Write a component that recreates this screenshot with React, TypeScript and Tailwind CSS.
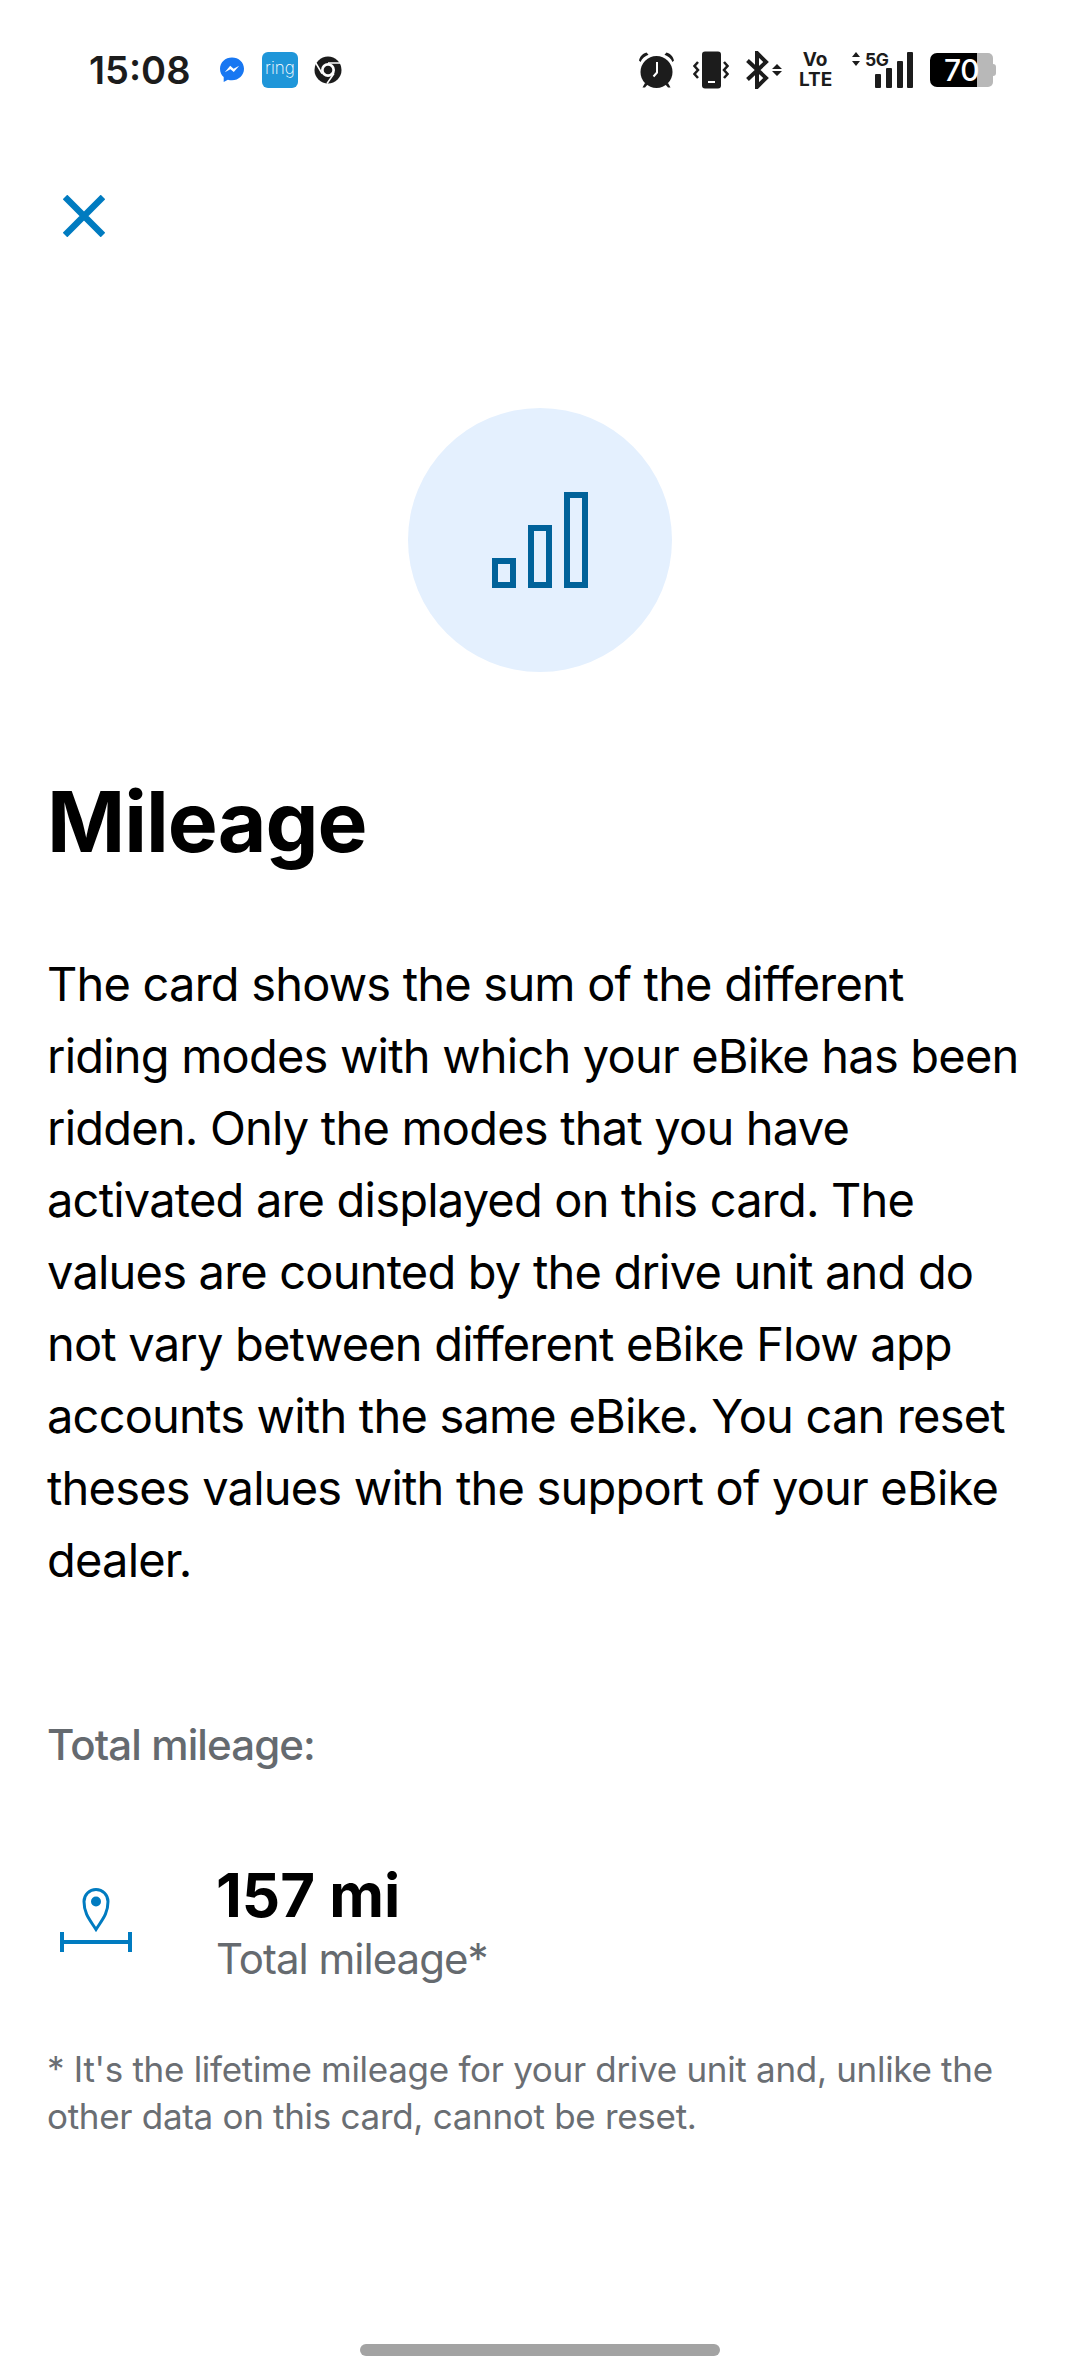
function CloseIcon() {
  return (
    <svg width="42" height="42" viewBox="0 0 42 42" fill="none" stroke="#007bc0" strokeWidth="6.500">
      <path d="M2 2l38 38M40 2L2 40" />
    </svg>
  );
}

function Messenger() {
  return (
    <svg width="24" height="26" viewBox="0 0 24 26">
      <path d="M12 0.500C5.400 0.500 0 5.300 0 11.800c0 3.400 1.400 6.300 3.700 8.300V25l4.200-2.300c1.300.4 2.700.6 4.100.6 6.600 0 12-4.900 12-11.500S18.600 0.500 12 0.500z" fill="#1877f2" />
      <path d="M4.800 15.200l5.400-6.400 3.400 2.900 5.600-3-5.400 6.400-3.400-2.900z" fill="#fff" />
    </svg>
  );
}

function Chrome() {
  return (
    <svg width="28" height="28" viewBox="0 0 28 28">
      <circle cx="14" cy="14" r="13.500" fill="#1c1c1c" />
      <circle cx="14" cy="14" r="7" fill="#fff" />
      <circle cx="14" cy="14" r="4.300" fill="#1c1c1c" />
      <path d="M14 7h12.500M20 17.500L13 27.500M8 17.500L1.800 7" stroke="#fff" strokeWidth="1.500" />
    </svg>
  );
}

function Alarm() {
  return (
    <svg width="37" height="38" viewBox="0 0 37 38" fill="#1c1c1c">
      <circle cx="18.500" cy="21" r="16" />
      <path d="M1 9.500C2 5 5 2.500 8.500 1.500l2 2.200C7 5 4 7.500 2.500 11zM36 9.500C35 5 32 2.500 28.500 1.500l-2 2.200C30 5 33 7.500 34.500 11zM7 32l-2.500 4.500h2.500l3-3.500zM30 32l2.500 4.500H30l-3-3.500z" />
      <path d="M19 11v10.500l-3.500 4" stroke="#fff" strokeWidth="2" fill="none" />
    </svg>
  );
}

function Vibrate() {
  return (
    <svg width="36" height="38" viewBox="0 0 36 38" fill="none">
      <rect x="9" y="0.500" width="19" height="37" rx="3" fill="#1c1c1c" />
      <rect x="15" y="30" width="7" height="2" fill="#fff" />
      <path d="M5 11L1.500 15 5 19 1.500 23 5 27" stroke="#1c1c1c" strokeWidth="2.500" />
      <path d="M31 11l3.500 4-3.500 4 3.500 4-3.500 4" stroke="#1c1c1c" strokeWidth="2.500" />
    </svg>
  );
}

function Bluetooth() {
  return (
    <svg width="36" height="38" viewBox="0 0 36 38" fill="none">
      <path d="M1.500 9.500L20 27l-9 9V2l9 9L1.500 28.500" stroke="#1c1c1c" strokeWidth="4" />
      <path d="M26 18l5-5 5 5zM26 20l5 5 5-5z" fill="#1c1c1c" />
    </svg>
  );
}

function Network() {
  return (
    <svg width="61" height="38" viewBox="0 0 61 38" fill="#1c1c1c" className="overflow-visible">
      <path d="M0 6l4-5 4 5zM0 10l4 5 4-5z" />
      <text x="13" y="15" fontSize="17.500" fontWeight="700" letterSpacing="-0.5" fontFamily="Inter, sans-serif">5G</text>
      <rect x="23" y="23" width="6" height="14" rx="1" />
      <rect x="34" y="17" width="6" height="20" rx="1" />
      <rect x="45" y="10" width="6" height="27" rx="1" />
      <rect x="55" y="1" width="6" height="36" rx="1" />
    </svg>
  );
}

function Battery() {
  return (
    <div className="relative flex items-center w-[66px]">
      <div className="w-[47px] h-[34px] bg-black rounded-l-[7px]" />
      <div className="w-[16px] h-[34px] bg-[#b8b8b8] rounded-r-[5px]" />
      <div className="w-[3px] h-[12px] bg-[#b8b8b8] rounded-r-sm" />
      <span className="absolute left-[14px] top-0 text-white text-[30px] font-medium leading-[34px] tracking-[-0.5px]">70</span>
    </div>
  );
}

function ChartIcon() {
  return (
    <svg width="96" height="96" viewBox="0 0 96 96" fill="none" stroke="#00629a" strokeWidth="6">
      <rect x="3" y="69" width="18" height="24" />
      <rect x="39" y="36" width="18" height="57" />
      <rect x="75" y="3" width="18" height="90" />
    </svg>
  );
}

function DistanceIcon() {
  return (
    <svg width="72" height="64" viewBox="0 0 72 64" fill="none" stroke="#007bc0">
      <path d="M36 41.500C30 32 24 26 24 13.500a12 12 0 0 1 24 0C48 26 42 32 36 41.500z" strokeWidth="3" />
      <circle cx="36" cy="13.500" r="5" fill="#007bc0" stroke="none" />
      <path d="M0 54h71" strokeWidth="4" />
      <path d="M2 44v20M70 44v20" strokeWidth="4" />
    </svg>
  );
}

export default function App() {
  return (
    <div className="w-[1080px] h-[2374px] bg-white flex flex-col font-['Inter',sans-serif]">
      <div className="h-[140px] flex items-center justify-between pl-[89px] pr-[84px] text-[#1c1c1c]">
        <div className="flex items-center">
          <span className="text-[38px] font-semibold leading-none w-[131px]">15:08</span>
          <Messenger />
          <div className="ml-[18px] w-[36px] h-[36px] rounded-[6px] bg-[#1f96d9] text-white text-[17px] leading-[33px] text-center font-extralight">ring</div>
          <div className="ml-[16px]"><Chrome /></div>
        </div>
        <div className="flex items-center">
          <Alarm />
          <div className="ml-[18px]"><Vibrate /></div>
          <div className="ml-[17px]"><Bluetooth /></div>
          <div className="ml-[17px] w-[32px] text-[19px] leading-[20px] font-bold text-center">Vo<br />LTE</div>
          <div className="ml-[21px]"><Network /></div>
          <div className="ml-[17px]"><Battery /></div>
        </div>
      </div>

      <div className="pl-[63px] pt-[55px]">
        <CloseIcon />
      </div>

      <div className="mt-[171px] flex justify-center">
        <div className="w-[264px] h-[264px] rounded-full bg-[#e4f0fe] flex items-center justify-center">
          <ChartIcon />
        </div>
      </div>

      <div className="px-[47px] pt-[100px]">
        <h1 className="text-[84px] font-bold leading-[100px] tracking-[-1px] text-black">Mileage</h1>
        <p className="mt-[76px] text-[47px] leading-[72px] tracking-[-0.8px] text-black">
          The card shows the sum of the different riding modes with which your eBike has been ridden. Only the modes that you have activated are displayed on this card. The values are counted by the drive unit and do not vary between different eBike Flow app accounts with the same eBike. You can reset theses values with the support of your eBike dealer.
        </p>
        <p className="mt-[121px] text-[42px] leading-[56px] font-medium tracking-[-0.9px] text-[#656a6f]">Total mileage:</p>
        <div className="mt-[87px] flex items-start">
          <div className="w-[169px] pl-[13px] pt-[28px]">
            <DistanceIcon />
          </div>
          <div>
            <div className="text-[60px] font-bold leading-[71px] text-black">157 mi</div>
            <div className="text-[42px] leading-[56px] tracking-[-1px] text-[#656a6f]">Total mileage*</div>
          </div>
        </div>
        <p className="mt-[59px] text-[35px] leading-[47px] tracking-[-0.3px] text-[#6a6e73]">
          * It's the lifetime mileage for your drive unit and, unlike the other data on this card, cannot be reset.
        </p>
      </div>

      <div className="mt-auto pb-[18px] flex justify-center">
        <div className="w-[360px] h-[12px] rounded-full bg-[#a3a3a3]" />
      </div>
    </div>
  );
}
